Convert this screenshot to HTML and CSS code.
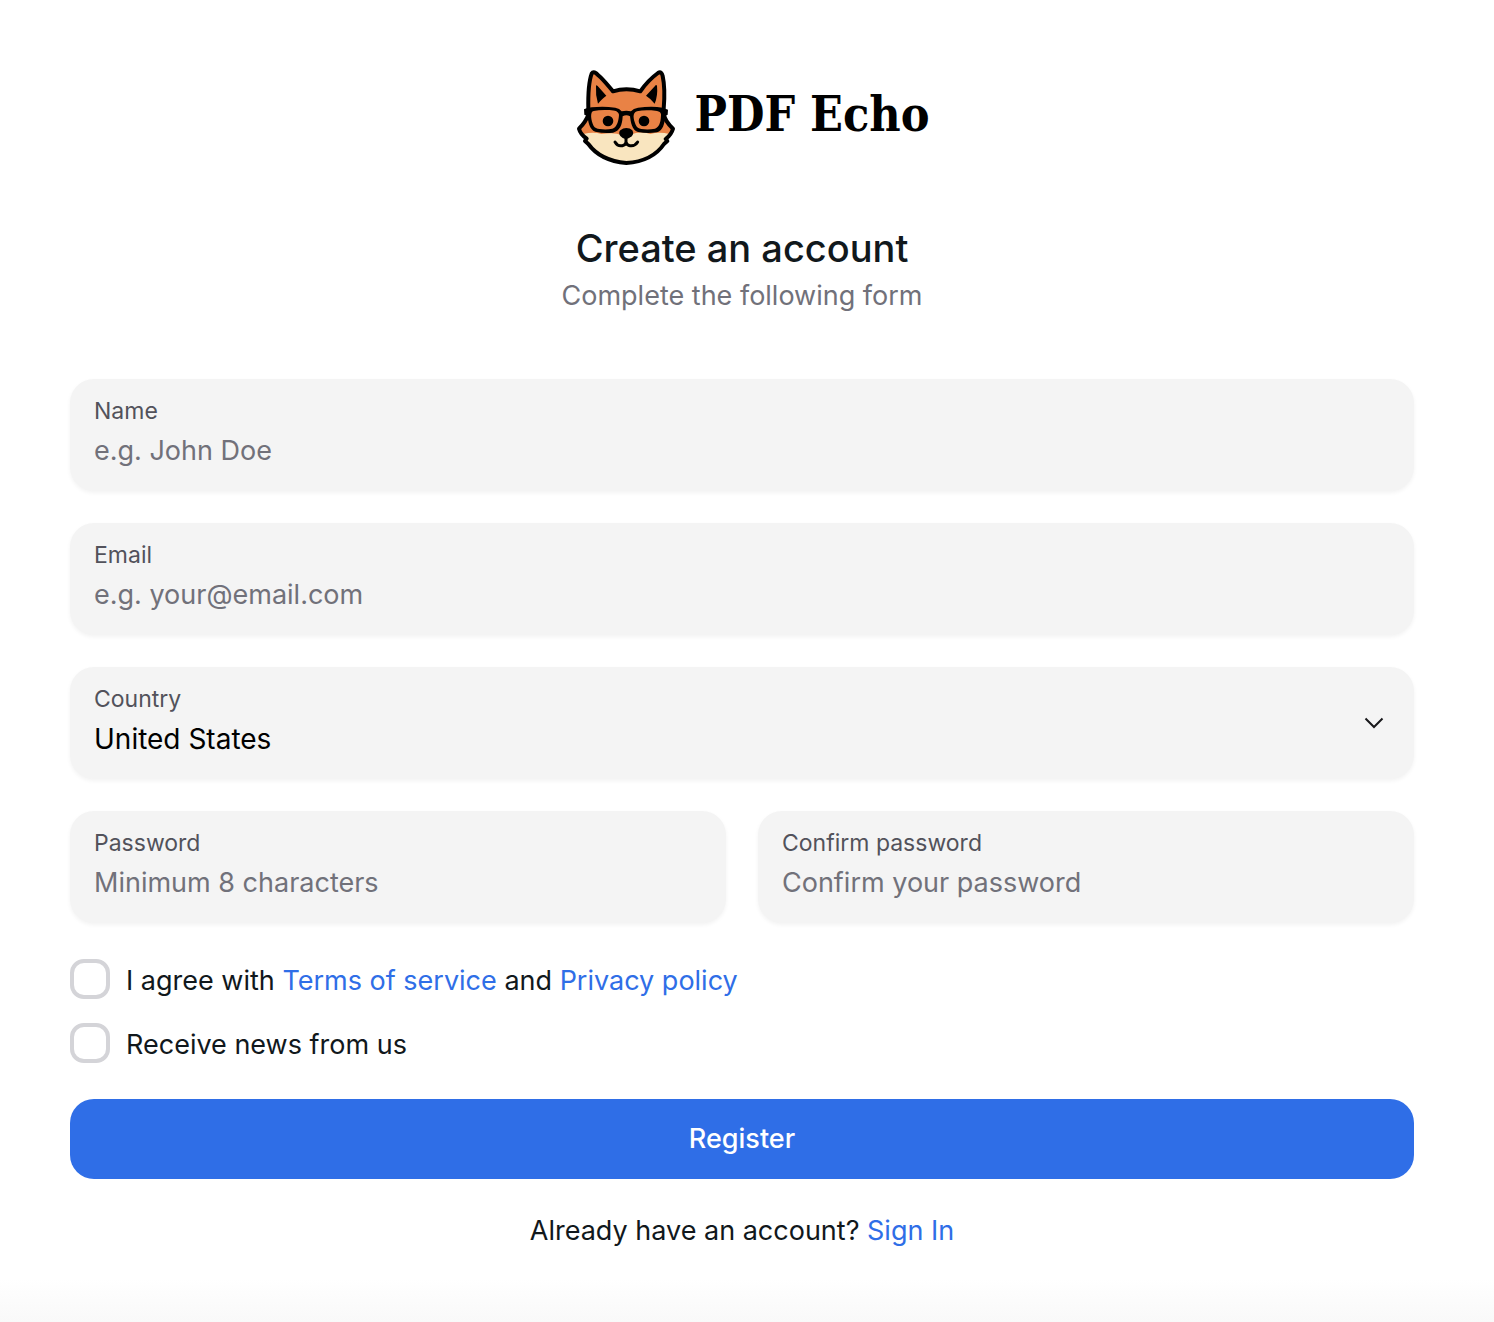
FILE: index.html
```html
<!DOCTYPE html>
<html lang="en">
<head>
<meta charset="utf-8">
<meta name="viewport" content="width=device-width, initial-scale=1">
<title>Create an account - PDF Echo</title>
<link rel="stylesheet" href="styles.css">
</head>
<body>
<main class="page">
  <header class="header">
    <div class="brand">
      <svg class="brand-mark" viewBox="-36 0 396 345" aria-hidden="true">
        <path fill="#e98245" d="M65 148C67 100 70 60 77 41C82 33 89 38 96 45C114 60 127 78 141 94Q181 82 223 94C239 71 258 52 276 39C284 34 288 39 290 48C296 75 296 112 294 148L302 183L321 206L304 236L180 260L60 236L39 206L62 181Z"/>
        <path fill="#f9e5bf" d="M52 222Q83 215 106 222Q145 216 165 224L180 232L196 223Q222 213 253 222Q280 214 310 222L301 242L298 252Q262 306 181 309Q101 303 65 250L61 239Z"/>
        <path fill="none" stroke="#000" stroke-width="12" stroke-linejoin="round" stroke-linecap="round" d="M67 148C66 100 70 60 77 41C82 33 89 38 96 45C114 60 127 78 141 94Q181 82 223 94C239 71 258 52 276 39C284 34 288 39 290 48C296 75 296 112 293 148M294 164Q297 184 321 206Q316 224 299 237L304 243L294 252Q259 304 181 309Q103 302 67 252L57 243L62 236Q43 222 39 206Q60 185 67 164"/>
        <path d="M90 77Q91 74 95 78L121 107Q110 114 96 131Q88 105 90 77ZM273 77Q270 73 267 78L240 107Q253 115 266 131Q276 107 273 77Z"/>
        <path d="M54 148Q62 143 77 142Q112 138 148 143Q161 145 167 154Q181 150 195 154Q202 145 216 143Q258 138 290 143L306 149L305 164L297 168C297 190 290 213 273 217Q244 222 216 216C197 211 194 184 192 169Q181 163 170 169C169 195 161 214 141 218Q113 221 88 215C70 209 66 184 65 168L55 164ZM83 153C71 155 75 182 83 198Q88 206 101 207Q121 210 139 206C154 201 158 181 159 164C157 151 140 151 125 150Q101 149 83 153ZM213 154C198 158 202 178 209 194Q214 205 226 207Q247 210 267 206C282 202 285 180 285 163C284 152 266 152 250 151Q230 150 213 154Z" fill-rule="evenodd"/>
        <circle cx="126" cy="183" r="16"/>
        <circle cx="234" cy="183" r="16"/>
        <path d="M163 211Q171 204 181 204Q192 204 199 211Q205 222 197 229Q187 237 180 238Q171 237 163 228Q156 219 163 211Z"/>
        <path fill="none" stroke="#000" stroke-width="9" stroke-linecap="round" d="M180 234V251M147 246Q155 260 169 257Q178 255 180 247Q183 256 192 257Q207 259 215 246"/>
      </svg>
      <span class="brand-name">PDF Echo</span>
    </div>
    <h1 class="title">Create an account</h1>
    <p class="subtitle">Complete the following form</p>
  </header>
  <form class="form">
    <div class="field">
      <label class="field-label" for="name">Name</label>
      <input class="field-control" id="name" type="text" placeholder="e.g. John Doe">
    </div>
    <div class="field">
      <label class="field-label" for="email">Email</label>
      <input class="field-control" id="email" type="email" placeholder="e.g. your@email.com">
    </div>
    <div class="field">
      <label class="field-label" for="country">Country</label>
      <select class="field-control field-select" id="country">
        <option>United States</option>
      </select>
      <svg class="chevron" viewBox="0 0 20 12" aria-hidden="true"><path d="M1.500 1.500L10 10L18.500 1.500"/></svg>
    </div>
    <div class="field-row">
      <div class="field">
        <label class="field-label" for="password">Password</label>
        <input class="field-control" id="password" type="password" placeholder="Minimum 8 characters">
      </div>
      <div class="field">
        <label class="field-label" for="confirm">Confirm password</label>
        <input class="field-control" id="confirm" type="password" placeholder="Confirm your password">
      </div>
    </div>
    <div class="checks">
      <div class="check">
        <input class="check-box" id="terms" type="checkbox">
        <label class="check-label" for="terms">I agree with <a class="link" href="#terms">Terms of service</a> and <a class="link" href="#privacy">Privacy policy</a></label>
      </div>
      <div class="check">
        <input class="check-box" id="news" type="checkbox">
        <label class="check-label" for="news">Receive news from us</label>
      </div>
    </div>
    <button class="submit" type="submit">Register</button>
  </form>
  <p class="signin">Already have an account? <a class="link" href="#signin">Sign In</a></p>
</main>
<div class="page-end"></div>
</body>
</html>
```
FILE: styles.css
```css
* {
  box-sizing: border-box;
}

body {
  display: flex;
  flex-direction: column;
  min-height: 100vh;
  margin: 0;
  background: #fff;
  color: #11181c;
  font-family: Inter, "Liberation Sans", sans-serif;
  font-size: 27px;
  line-height: 40px;
}

.page {
  padding: 60px 80px 0 70px;
}

.header {
  display: flex;
  flex-direction: column;
  align-items: center;
}

.brand {
  display: flex;
  align-items: center;
  gap: 8px;
}

.brand-mark {
  width: 132px;
  height: 115px;
}

.brand-name {
  padding-bottom: 8px;
  color: #000;
  font-family: "DejaVu Serif Condensed", "DejaVu Serif", serif;
  font-size: 48px;
  font-stretch: condensed;
  font-weight: 700;
  line-height: 60px;
}

.title {
  margin: 49px 0 0;
  font-size: 38px;
  font-weight: 500;
  line-height: 48px;
}

.subtitle {
  margin: 4px 0 0;
  color: #71717a;
}

.form {
  display: flex;
  flex-direction: column;
  gap: 32px;
  margin-top: 63px;
}

.field {
  position: relative;
  display: flex;
  flex: 1;
  flex-direction: column;
  gap: 4px;
  padding: 16px 24px 20px;
  border-radius: 24px;
  background: #f4f4f4;
  box-shadow: 0 2px 4px rgba(0, 0, 0, 0.05);
}

.field-row {
  display: flex;
  gap: 32px;
}

.field-label {
  color: #52525b;
  font-size: 23px;
  line-height: 32px;
}

.field-control {
  width: 100%;
  height: 40px;
  padding: 0;
  border: 0;
  outline: 0;
  appearance: none;
  background: transparent;
  color: #000;
  font: inherit;
}

.field-select {
  font-size: 28px;
}

.field-control::placeholder {
  color: #71717a;
  opacity: 1;
}

.chevron {
  position: absolute;
  top: 50px;
  right: 30px;
  width: 20px;
  height: 12px;
  fill: none;
  stroke: #18181b;
  stroke-width: 2;
  pointer-events: none;
}

.checks {
  display: flex;
  flex-direction: column;
  gap: 20px;
  padding: 4px 0 0;
}

.check {
  display: flex;
  align-items: flex-start;
  gap: 16px;
}

.check-box {
  flex: none;
  width: 40px;
  height: 40px;
  margin: 0;
  border: 4px solid #d4d4d8;
  border-radius: 14px;
  appearance: none;
  background: #fff;
}

.check-label {
  line-height: 44px;
}

.link {
  color: #2f6ee7;
  text-decoration: none;
}

.submit {
  height: 80px;
  border: 0;
  border-radius: 24px;
  background: #2f6ee7;
  color: #fff;
  font: inherit;
  font-weight: 500;
}

.signin {
  margin: 32px 0 0;
  text-align: center;
}

.page-end {
  flex: 1;
  min-height: 40px;
  margin-top: 28px;
  background: linear-gradient(#fff, #f9f9f9);
}
```
